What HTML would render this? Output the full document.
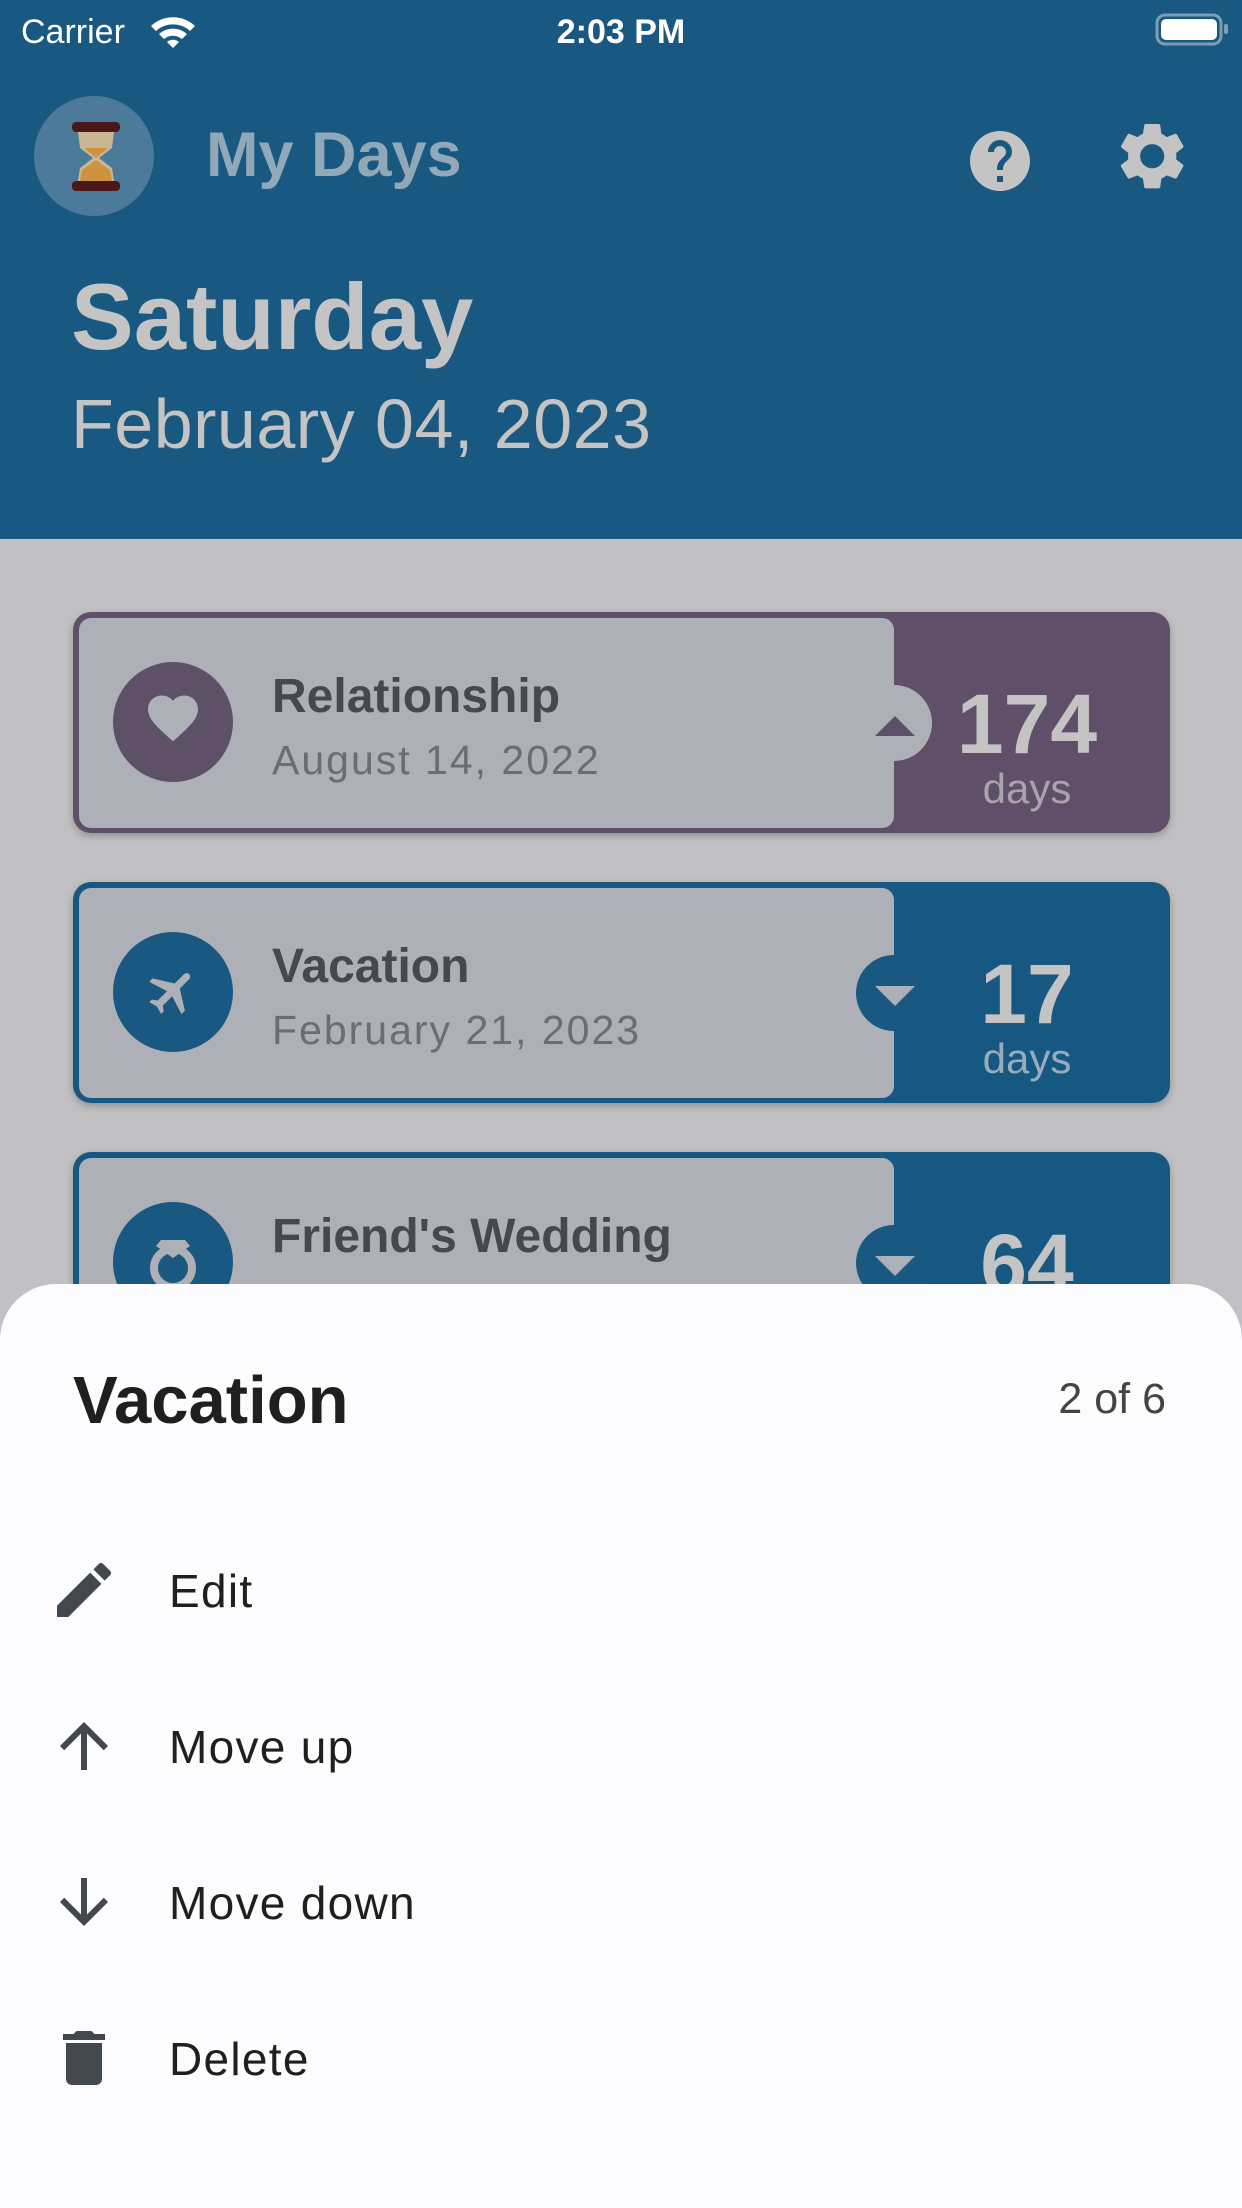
<!DOCTYPE html>
<html><head><meta charset="utf-8"><style>
html,body{margin:0;padding:0;width:1242px;height:2208px;overflow:hidden;background:#fcfcfe}
svg{display:block}
text{font-family:"Liberation Sans",Arial,sans-serif}
</style></head><body>
<svg width="1242" height="2208" viewBox="0 0 1242 2208" xmlns="http://www.w3.org/2000/svg">
<defs>
<filter id="sh" x="-5%" y="-10%" width="110%" height="130%"><feDropShadow dx="0" dy="3" stdDeviation="4" flood-color="#000" flood-opacity="0.25"/></filter>
</defs>
<rect x="0" y="0" width="1242" height="539" fill="#195981"/>
<rect x="0" y="539" width="1242" height="1669" fill="#c1c1c3"/>
<text x="21" y="43" font-size="34" fill="#fff">Carrier</text>
<g transform="translate(173,40)" fill="#fff">
<path d="M-22,-14 A32,32 0 0 1 22,-14 L17,-9 A25,25 0 0 0 -17,-9Z"/>
<path d="M-14,-6 A21,21 0 0 1 14,-6 L9,-1 A14,14 0 0 0 -9,-1Z"/>
<path d="M-6,2 A9,9 0 0 1 6,2 L0,8Z"/>
</g>
<text x="621" y="43" font-size="34" fill="#fff" text-anchor="middle" font-weight="bold">2:03 PM</text>
<rect x="1157" y="15" width="64" height="29" rx="8" fill="none" stroke="#7d9db5" stroke-width="3"/>
<rect x="1161" y="19" width="56" height="21" rx="5" fill="#fff"/>
<rect x="1224" y="24" width="4" height="10" rx="2" fill="#7d9db5"/>
<circle cx="94" cy="156" r="60" fill="#4b7a9b"/>
<g>
<rect x="72" y="122" width="48" height="10" rx="4" fill="#4a1818"/>
<rect x="72" y="181" width="48" height="10" rx="4" fill="#4a1818"/>
<path d="M78,132 L114,132 L112,148 L99,158 L112,168 L114,181 L78,181 L80,168 L93,158 L80,148Z" fill="#c9b795"/>
<path d="M84,148 L108,148 L96,158Z" fill="#cf9340"/>
<path d="M96,160 L110,170 L112,181 L80,181 L82,170Z" fill="#cf9340"/>
</g>
<text x="206" y="176" font-size="63" font-weight="bold" fill="#91a8b9">My Days</text>
<g transform="translate(964,125) scale(3.0)" fill="#c4c4c4"><path d="M12 2C6.48 2 2 6.48 2 12s4.48 10 10 10 10-4.48 10-10S17.52 2 12 2zm1 17h-2v-2h2v2zm2.07-7.75l-.9.92C13.45 12.9 13 13.5 13 15h-2v-.5c0-1.1.45-2.1 1.17-2.83l1.24-1.26c.37-.36.59-.86.59-1.41 0-1.1-.9-2-2-2s-2 .9-2 2H8c0-2.21 1.79-4 4-4s4 1.79 4 4c0 .88-.36 1.68-.93 2.25z"/></g>
<g transform="translate(1112,116) scale(3.35)" fill="#c4c4c4"><path d="M19.14 12.94c.04-.3.06-.61.06-.94 0-.32-.02-.64-.07-.94l2.03-1.58c.18-.14.23-.41.12-.61l-1.92-3.32c-.12-.22-.37-.29-.59-.22l-2.39.96c-.5-.38-1.03-.7-1.620-.94l-.36-2.54c-.04-.24-.24-.41-.48-.41h-3.84c-.24 0-.43.17-.47.41l-.36 2.54c-.59.24-1.13.57-1.62.94l-2.39-.96c-.22-.08-.47 0-.59.22L2.74 8.87c-.12.21-.08.47.12.61l2.03 1.58c-.05.3-.09.63-.09.94s.02.64.07.94l-2.03 1.58c-.18.14-.23.41-.12.61l1.92 3.32c.12.22.37.29.59.22l2.390-.96c.5.38 1.03.7 1.62.94l.36 2.54c.05.24.24.41.48.41h3.84c.24 0 .44-.17.47-.41l.36-2.54c.59-.24 1.13-.56 1.62-.94l2.39.96c.22.08.47 0 .59-.22l1.920-3.32c.12-.22.07-.47-.12-.61l-2.01-1.58zM12 15.6c-1.98 0-3.6-1.62-3.6-3.6s1.62-3.6 3.6-3.6 3.6 1.62 3.6 3.6-1.620 3.6-3.6 3.6z"/></g>
<text x="71" y="349" font-size="94" font-weight="bold" fill="#c4c4c4">Saturday</text>
<text x="71" y="448" font-size="70" fill="#c4c4c4" letter-spacing="0.5">February 04, 2023</text>

<g filter="url(#sh)">
<rect x="73" y="612" width="1097" height="221" rx="18" fill="#5e5067"/>
</g>
<rect x="79" y="618" width="815" height="210" rx="12" fill="#adb0b7"/>
<circle cx="894" cy="723" r="38" fill="#adb0b7"/>
<path d="M875,736 L915,736 L895,716Z" fill="#5e5067"/>
<circle cx="173" cy="722" r="60" fill="#5e5067"/>
<g transform="translate(143,688) scale(2.5)" fill="#adb0b7"><path d="M12 21.35l-1.45-1.32C5.4 15.36 2 12.28 2 8.5 2 5.42 4.42 3 7.5 3c1.74 0 3.41.81 4.5 2.09C13.09 3.81 14.76 3 16.5 3 19.58 3 22 5.420 22 8.5c0 3.78-3.4 6.86-8.55 11.54L12 21.35z"/></g>
<text x="272" y="712" font-size="48" font-weight="bold" fill="#45484d">Relationship</text>
<text x="272" y="774" font-size="41" fill="#6a6d72" letter-spacing="2">August 14, 2022</text>
<text x="1027" y="753" font-size="84" font-weight="bold" fill="#c4c4c4" text-anchor="middle">174</text>
<text x="1027" y="803" font-size="42" fill="#a8a4ae" text-anchor="middle">days</text>

<g filter="url(#sh)">
<rect x="73" y="882" width="1097" height="221" rx="18" fill="#195981"/>
</g>
<rect x="79" y="888" width="815" height="210" rx="12" fill="#adb0b7"/>
<circle cx="894" cy="993" r="38" fill="#195981"/>
<path d="M875,986 L915,986 L895,1006Z" fill="#adb0b7"/>
<circle cx="173" cy="992" r="60" fill="#195981"/>
<g transform="translate(173,992) rotate(45) scale(2.4) translate(-12,-12)" fill="#adb0b7"><path d="M21 16v-2l-8-5V3.5c0-.83-.67-1.5-1.5-1.5S10 2.67 10 3.5V9l-8 5v2l8-2.5V19l-2 1.5V22l3.5-1 3.5 1v-1.5L13 19v-5.5l8 2.5z"/></g>
<text x="272" y="982" font-size="48" font-weight="bold" fill="#45484d">Vacation</text>
<text x="272" y="1044" font-size="41" fill="#6a6d72" letter-spacing="2">February 21, 2023</text>
<text x="1027" y="1023" font-size="84" font-weight="bold" fill="#c4c4c4" text-anchor="middle">17</text>
<text x="1027" y="1073" font-size="42" fill="#98acbd" text-anchor="middle">days</text>

<g filter="url(#sh)">
<rect x="73" y="1152" width="1097" height="221" rx="18" fill="#195981"/>
</g>
<rect x="79" y="1158" width="815" height="210" rx="12" fill="#adb0b7"/>
<circle cx="894" cy="1263" r="38" fill="#195981"/>
<path d="M875,1256 L915,1256 L895,1276Z" fill="#adb0b7"/>
<circle cx="173" cy="1262" r="60" fill="#195981"/>
<circle cx="173" cy="1268" r="19" fill="none" stroke="#adb0b7" stroke-width="8"/>
<path d="M161,1240 L185,1240 L190,1246 L173,1258 L156,1246Z" fill="#adb0b7"/>
<text x="272" y="1252" font-size="48" font-weight="bold" fill="#45484d">Friend's Wedding</text>
<text x="1027" y="1293" font-size="84" font-weight="bold" fill="#c4c4c4" text-anchor="middle">64</text>

<rect x="0" y="1284" width="1242" height="1000" rx="56" fill="#fcfcfe"/>
<text x="73" y="1423" font-size="67" font-weight="bold" fill="#1f1f1f">Vacation</text>
<text x="1166" y="1413" font-size="43" fill="#444" text-anchor="end">2 of 6</text>

<g fill="#43474e">
<g transform="translate(48,1554) scale(3)"><path d="M3 17.25V21h3.75L17.81 9.94l-3.75-3.75L3 17.25zM20.71 7.04c.39-.39.39-1.02 0-1.41l-2.34-2.34c-.39-.39-1.02-.39-1.41 0l-1.83 1.83 3.75 3.75 1.83-1.83z"/></g>
<g transform="translate(48,1710) scale(3)"><path d="M4 12l1.41 1.41L11 7.83V20h2V7.83l5.58 5.59L20 12l-8-8-8 8z"/></g>
<g transform="translate(48,1866) scale(3)"><path d="M20 12l-1.41-1.41L13 16.17V4h-2v12.17l-5.58-5.59L4 12l8 8 8-8z"/></g>
<g transform="translate(48,2022) scale(3)"><path d="M6 19c0 1.1.9 2 2 2h8c1.1 0 2-.9 2-2V7H6v12zM19 4h-3.5l-1-1h-5l-1 1H5v2h14V4z"/></g>
</g>
<g font-size="46" fill="#1f1f1f" letter-spacing="1.3">
<text x="169" y="1607">Edit</text>
<text x="169" y="1763">Move up</text>
<text x="169" y="1919">Move down</text>
<text x="169" y="2075">Delete</text>
</g>
</svg>
</body></html>
